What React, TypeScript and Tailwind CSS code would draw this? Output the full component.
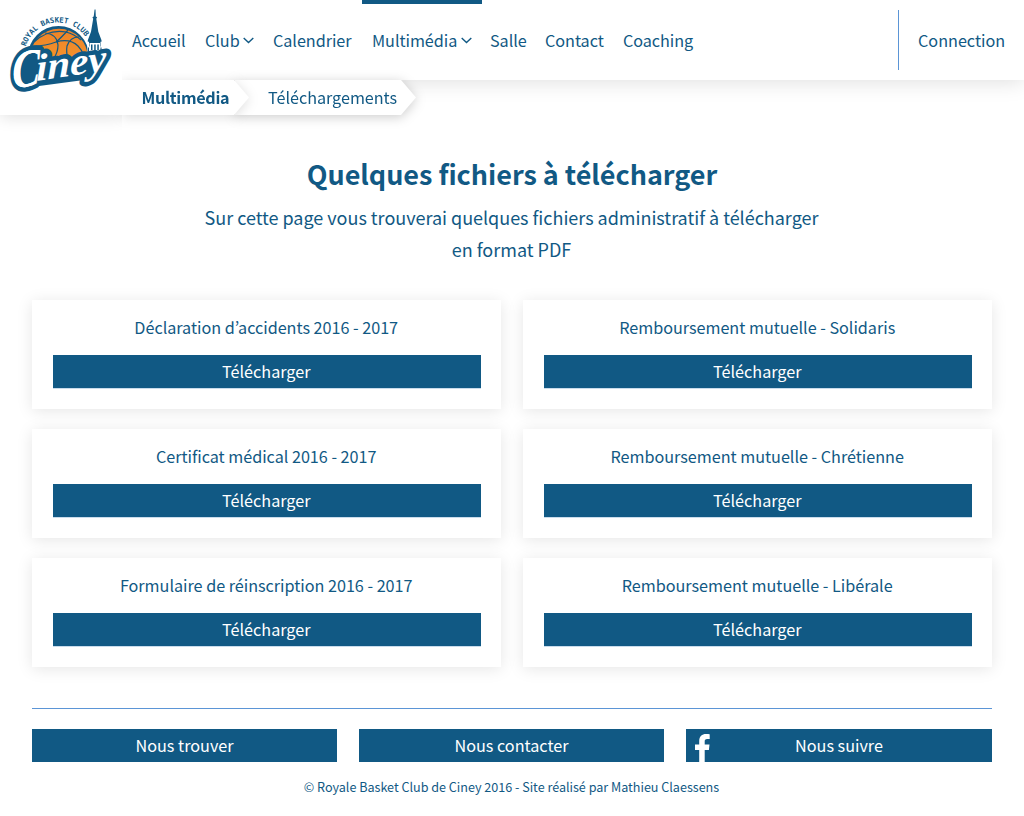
import React from "react";

type NavItem = { label: string; width: string; menu?: boolean; active?: boolean };

const navItems: NavItem[] = [
  { label: "Accueil", width: "w-[73px]" },
  { label: "Club", width: "w-[68px]", menu: true },
  { label: "Calendrier", width: "w-[99px]" },
  { label: "Multimédia", width: "w-[120px] -mr-0.5", menu: true, active: true },
  { label: "Salle", width: "w-[55px]" },
  { label: "Contact", width: "w-[78px]" },
  { label: "Coaching", width: "w-[90px]" },
];

const files = [
  "Déclaration d’accidents 2016 - 2017",
  "Remboursement mutuelle - Solidaris",
  "Certificat médical 2016 - 2017",
  "Remboursement mutuelle - Chrétienne",
  "Formulaire de réinscription 2016 - 2017",
  "Remboursement mutuelle - Libérale",
];

function Logo() {
  return (
    <svg viewBox="0 0 122 115" className="block h-[115px] w-[122px]" aria-label="Royal Basket Club Ciney">
      <defs>
        <linearGradient id="ball" x1="0" y1="0" x2="0" y2="1">
          <stop offset="0" stopColor="#ee8326" />
          <stop offset="1" stopColor="#f9a033" />
        </linearGradient>
        <clipPath id="ballTop">
          <path d="M20 10h85v58H20z" />
        </clipPath>
        <path id="arc" d="M24.500 56 A33.500 33.500 0 0 1 91.500 56" />
      </defs>
      <g clipPath="url(#ballTop)">
        <circle cx="58.5" cy="56.5" r="30.5" fill="#115984" />
        <circle cx="59" cy="57.5" r="28.800" fill="url(#ball)" />
        <g fill="none" stroke="#115984" strokeWidth="1.2">
          <path d="M34 42Q48 29 66 32Q74 34 81 40" />
          <path d="M45 33Q57 34 58 45Q58 52 54 58" />
          <path d="M68 30Q61 38 56 42Q46 46 33 46" />
          <path d="M79 37Q70 37 67 46Q66 52 68 60" />
          <path d="M56 42Q70 38 78 46Q82 50 84 56" />
        </g>
      </g>
      <text
        fontFamily="'DejaVu Sans Mono','Liberation Mono',monospace"
        fontWeight="700"
        fontSize="7.4"
        fill="#115984"
      >
        <textPath href="#arc" startOffset="9.5" textLength="75" lengthAdjust="spacingAndGlyphs">
          ROYAL BASKET CLUB
        </textPath>
      </text>
      <path
        d="M94.600 9.500h.9l.3 7 1.300.8-.8 1.500 2 13 3.200 8.500v1.500h-1v12H89V41.800h-1.200v-1.500l3.200-8.500 2.200-13-.8-1.500 1.300-.8z"
        fill="#115984"
      />
      <path d="M89.500 43h10.500v9H89.500zM87.500 46.500H90V54h-2.500zM99.500 46.500h2.500V54h-2.500z" fill="#fff" />
      <path d="M91 44.500h1.500V50H91zM94.200 44.500h1.500V50h-1.500zM97.300 44.500h1.500V50h-1.500zM100.500 47.500h1v4h-1zM88 47.500h1v4h-1z" fill="#115984" />
      <path d="M18 60 24 51 38 52 46 60 70 58 104 54 104 68 84 80 24 88z" fill="#115984" />
      <g
        transform="translate(12.5 88.5) rotate(-8.5) skewX(-8)"
        fontFamily="'Liberation Serif',serif"
        fontStyle="italic"
        fontWeight="700"
        fill="#fff"
        stroke="#115984"
        strokeWidth="9"
        strokeLinejoin="round"
      >
        <text fontSize="53" textLength="28" lengthAdjust="spacingAndGlyphs" paintOrder="stroke">
          C
        </text>
        <text x="24" y="-4" fontSize="38" textLength="71" lengthAdjust="spacingAndGlyphs" paintOrder="stroke">
          iney
        </text>
        <text fontSize="53" textLength="28" lengthAdjust="spacingAndGlyphs" stroke="none">
          C
        </text>
      </g>
    </svg>
  );
}

function Chevron() {
  return (
    <svg viewBox="0 0 11 7" className="ml-[3.5px] mt-px h-[7px] w-[11px]" fill="none" stroke="#115984" strokeWidth="1.4">
      <path d="M.7 .9 5.500 5.600 10.300 .9" />
    </svg>
  );
}

function FacebookMark() {
  return (
    <svg viewBox="0 0 15 28" className="absolute top-[5px] left-[9px] h-7 w-[15px]" fill="#fff">
      <path d="M4.200 28V16H0v-5.600h4.200V7C4.200 2.500 7 0 11 0c1.800 0 3.200.1 3.700.2v4.900h-2.500C10.200 5.100 9.700 6 9.700 7.400v3H14.500L13.900 16H9.700v12z" />
    </svg>
  );
}

export default function App() {
  return (
    <div className="min-h-[816px] bg-white font-['Noto_Sans_CJK_KR','Open_Sans',sans-serif] text-[16.2px] text-[#115984]">
      <header className="flex h-20 items-start bg-white shadow-[0_2px_20px_rgba(0,0,0,0.13)]">
        <div className="relative z-10 h-[115px] w-[122px] shrink-0 bg-white shadow-[0_2px_15px_rgba(0,0,0,0.13)] [clip-path:inset(0_0_-20px_0)]">
          <Logo />
        </div>
        <nav className="flex h-20">
          {navItems.map((item) => (
            <a
              key={item.label}
              className={`flex items-center border-t-4 pb-1 pl-2.5 tracking-[-0.04px] whitespace-nowrap ${item.width} ${
                item.active ? "border-[#115984]" : "border-transparent"
              }`}
            >
              {item.label}
              {item.menu && <Chevron />}
            </a>
          ))}
        </nav>
        <a className="mt-2.5 ml-auto flex h-[60px] w-[126px] items-center border-l border-[#5b95d6] pl-[19px]">
          Connection
        </a>
      </header>

      <div className="flex h-[35px] pl-[122px]">
        <div className="relative z-[2] drop-shadow-[0_2px_6px_rgba(0,0,0,0.13)]">
          <div className="flex h-[35px] w-[127px] items-center bg-white pb-px pl-[19.5px] font-bold tracking-[-0.3px] [clip-path:polygon(0_0,112px_0,100%_50%,112px_100%,0_100%)]">
            Multimédia
          </div>
        </div>
        <div className="relative z-[1] -ml-[14px] drop-shadow-[0_2px_6px_rgba(0,0,0,0.2)]">
          <div className="flex h-[35px] w-[181px] items-center bg-white pb-px pl-[33px] tracking-[-0.03px] [clip-path:polygon(0_0,166px_0,100%_50%,166px_100%,0_100%)]">
            Téléchargements
          </div>
        </div>
      </div>

      <main className="px-8">
        <h1 className="mt-[37px] text-center text-[27px] leading-[44px] font-bold tracking-[-0.03px]">
          Quelques fichiers à télécharger
        </h1>
        <p className="mt-[5px] pr-px text-center text-[18px] leading-8 tracking-[-0.015px]">
          Sur cette page vous trouverai quelques fichiers administratif à télécharger
          <br />
          en format PDF
        </p>
        <section className="mt-[35px] grid grid-cols-2 gap-x-[22px] gap-y-5">
          {files.map((file) => (
            <article key={file} className="h-[109px] bg-white px-[21px] pt-[13px] text-center shadow-[0_2px_15px_rgba(0,0,0,0.1)]">
              <h2 className="h-[42px] pr-[0.6px] leading-7 tracking-[-0.02px]">{file}</h2>
              <a className="block h-[34px] w-[428px] border-b border-[#c9dcec] bg-[#115984] pr-[1.5px] leading-[33px] text-white">
                Télécharger
              </a>
            </article>
          ))}
        </section>
      </main>

      <footer className="mx-8 mt-[41px] border-t border-[#5b95d6] pt-5">
        <div className="grid grid-cols-[305px_305px_306px] gap-[22px] text-center leading-[33px] text-white">
          <a className="h-[33px] bg-[#115984]">Nous trouver</a>
          <a className="h-[33px] bg-[#115984]">Nous contacter</a>
          <a className="relative h-[33px] overflow-hidden bg-[#115984]">
            <FacebookMark />
            Nous suivre
          </a>
        </div>
        <p className="mt-[15px] pr-px text-center text-[12.6px] leading-5 tracking-[-0.015px]">
          © Royale Basket Club de Ciney 2016 - Site réalisé par Mathieu Claessens
        </p>
      </footer>
    </div>
  );
}
